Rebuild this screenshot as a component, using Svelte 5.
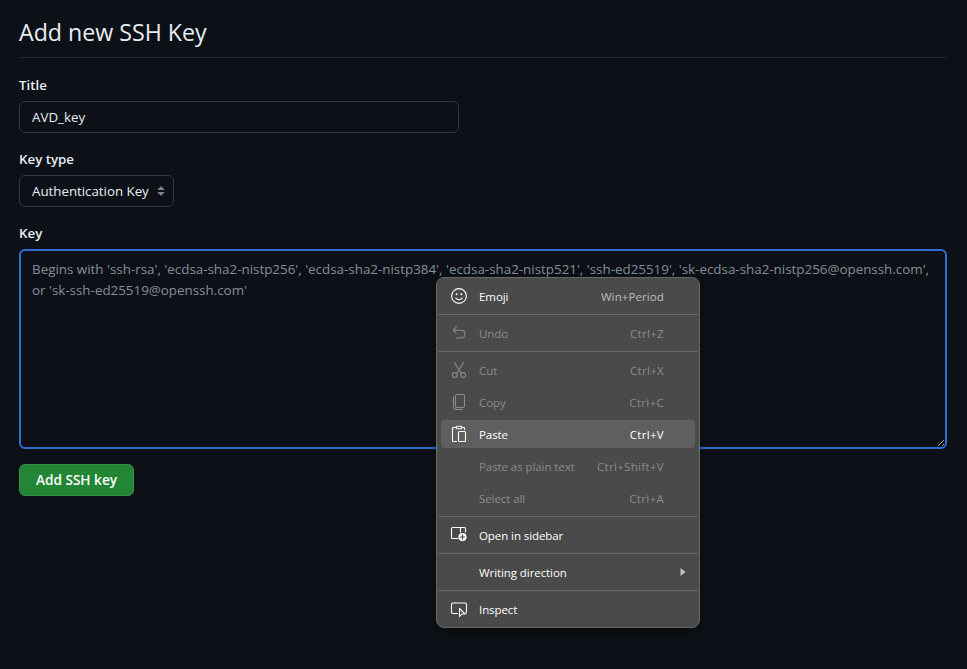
<script>
  const groups = [
    [{ label: 'Emoji', keys: 'Win+Period', icon: 'emoji', on: true }],
    [{ label: 'Undo', keys: 'Ctrl+Z', icon: 'undo' }],
    [
      { label: 'Cut', keys: 'Ctrl+X', icon: 'cut' },
      { label: 'Copy', keys: 'Ctrl+C', icon: 'copy' },
      { label: 'Paste', keys: 'Ctrl+V', icon: 'paste', on: true, active: true },
      { label: 'Paste as plain text', keys: 'Ctrl+Shift+V' },
      { label: 'Select all', keys: 'Ctrl+A' }
    ],
    [{ label: 'Open in sidebar', icon: 'sidebar', on: true }],
    [{ label: 'Writing direction', on: true, submenu: true }],
    [{ label: 'Inspect', icon: 'inspect', on: true }]
  ];
  const placeholder =
    "Begins with 'ssh-rsa', 'ecdsa-sha2-nistp256', 'ecdsa-sha2-nistp384', 'ecdsa-sha2-nistp521', 'ssh-ed25519', 'sk-ecdsa-sha2-nistp256@openssh.com', or 'sk-ssh-ed25519@openssh.com'";
  let title = $state('AVD_key');
</script>

<main>
  <h1>Add new SSH Key</h1>
  <form>
    <label for="title">Title</label>
    <input id="title" bind:value={title} />
    <label for="type">Key type</label>
    <div class="select">
      <select id="type"><option>Authentication Key</option></select>
      <svg width="16" height="16" viewBox="0 0 16 16"><path d="M4.2 7.1 8 2.9l3.8 4.2zM4.2 9h7.6L8 13.1z" fill="#7d8590" /></svg>
    </div>
    <label for="key">Key</label>
    <textarea id="key" {placeholder}></textarea>
    <button type="button">Add SSH key</button>
  </form>
</main>

<div class="menu">
  {#each groups as group, i}
    {#if i > 0}<div class="sep"></div>{/if}
    {#each group as item}
      <div class="item" class:on={item.on} class:active={item.active}>
        <span class="icon">
          <svg width="18" height="18" viewBox="0 0 18 18" fill="none" stroke="currentColor" stroke-width="1.1" stroke-linecap="round" stroke-linejoin="round">
            {#if item.icon === 'emoji'}
              <circle cx="9" cy="9" r="7.4" />
              <path d="M5.8 11.2c1.6 2.1 4.8 2.1 6.4 0" />
              <circle cx="6.6" cy="7.2" r="1" fill="currentColor" stroke="none" />
              <circle cx="11.4" cy="7.2" r="1" fill="currentColor" stroke="none" />
            {:else if item.icon === 'undo'}
              <path d="M6.2 3.2 3.2 6.2l3 3M3.4 6.2h7.4c2.5 0 4.2 1.5 4.2 3.9s-1.7 3.9-4.2 3.9H6.4" />
            {:else if item.icon === 'cut'}
              <path d="m4.4 1.5 6.9 10.7M13.6 1.5 6.7 12.2" />
              <circle cx="4.8" cy="14" r="2.4" />
              <circle cx="13.2" cy="14" r="2.4" />
            {:else if item.icon === 'copy'}
              <rect x="5.5" y="1.5" width="9" height="13" rx="1.6" />
              <path d="M3.5 3.5v10.2c0 1.8 1 2.8 2.8 2.8h6.2" />
            {:else if item.icon === 'paste'}
              <path d="M6 2.5H3.3c-.6 0-.8.3-.8.8v12.4c0 .5.3.8.8.8h3.2M12 2.5h1.7c.6 0 .8.3.8.8v1.2" />
              <rect x="6" y="1.3" width="6" height="2.4" rx="1.1" />
              <rect x="8.5" y="6.5" width="7" height="10" rx="1" />
            {:else if item.icon === 'sidebar'}
              <path d="M8 12.5H2.5c-.7 0-1-.4-1-1v-9c0-.6.3-1 1-1h12c.7 0 1 .4 1 1V6M10.500 1.500V6" />
              <circle cx="12.5" cy="11" r="4.1" fill="currentColor" stroke="none" />
              <path d="M12.5 8.900v4.200M10.400 11h4.200" stroke="#4a4a4a" stroke-width="1.2" />
            {:else if item.icon === 'inspect'}
              <path d="M7.5 13.500H3c-1 0-1.500-.5-1.500-1.500V4.500c0-1 .5-1.500 1.500-1.500h12c1 0 1.500.5 1.500 1.500V12c0 1-.5 1.500-1.500 1.500" />
              <path d="M9.5 8.500v8l2.200-2.500h3.300z" />
            {/if}
          </svg>
        </span>
        <span class="name">{item.label}</span>
        {#if item.keys}<span class="keys" class:ctrl={item.keys.startsWith('Ctrl')}>{item.keys}</span>{/if}
        {#if item.submenu}<svg class="arrow" width="6" height="8" viewBox="0 0 6 8"><path d="M.5 0v8L5.5 4z" fill="#c4c4c4" /></svg>{/if}
      </div>
    {/each}
  {/each}
</div>

<style>
  :global(body) {
    background: #0d1117;
  }
  :global(#app) {
    min-height: 669px;
    position: relative;
  }
  main,
  .menu,
  input,
  select,
  textarea,
  button {
    font-family: 'Open Sans', 'Noto Sans', sans-serif;
  }
  main {
    box-sizing: border-box;
    padding: 17px 20px 0 19px;
    color: #e6edf3;
  }
  h1 {
    margin: 0 0 18px;
    box-sizing: border-box;
    height: 41px;
    line-height: 30px;
    border-bottom: 1px solid #21262d;
    font-size: 23.2px;
    font-weight: 400;
  }
  form {
    display: flex;
    flex-direction: column;
    align-items: flex-start;
  }
  label {
    height: 18px;
    line-height: 18px;
    margin-bottom: 7px;
    font-weight: 600;
    font-size: 13.3px;
  }
  input,
  select {
    box-sizing: border-box;
    height: 32px;
    margin: 0;
    padding: 0 12px;
    border: 1px solid #30363d;
    border-radius: 6px;
    background: #0d1117;
    color: #e6edf3;
    font-size: 13.35px;
    outline: none;
  }
  input {
    width: 440px;
    margin-bottom: 17px;
  }
  .select {
    position: relative;
    height: 32px;
    margin-bottom: 17px;
  }
  select {
    width: 155px;
    appearance: none;
    letter-spacing: -0.03px;
  }
  .select svg {
    position: absolute;
    right: 5px;
    top: 8px;
  }
  textarea {
    box-sizing: border-box;
    width: 928px;
    height: 200px;
    margin: 0 0 15px;
    padding: 8px 11px;
    border: 2px solid #2f6dd0;
    border-radius: 6px;
    background: #0d1117;
    outline: none;
    font-size: 13.39px;
    line-height: 21px;
  }
  textarea::placeholder {
    color: #848d97;
  }
  button {
    width: 115px;
    height: 32px;
    padding: 0 0 1px;
    border: 1px solid #36924a;
    border-radius: 6px;
    background: #238636;
    color: #fff;
    font-size: 13.6px;
    font-weight: 600;
  }
  .menu {
    position: absolute;
    left: 436px;
    top: 277px;
    width: 264px;
    display: flex;
    flex-direction: column;
    box-sizing: border-box;
    padding: 2px 0;
    border: 1px solid #666;
    border-radius: 8px;
    background: #4a4a4a;
    box-shadow: 0 6px 12px rgba(0, 0, 0, 0.4);
    font-size: 11.5px;
    letter-spacing: -0.08px;
  }
  .sep {
    height: 1px;
    margin: 2px 1px;
    background: #686868;
  }
  .item {
    display: flex;
    align-items: center;
    box-sizing: border-box;
    height: 28px;
    margin: 2px 4px;
    padding: 0 31px 0 9px;
    border-radius: 4px;
    color: #8b8b8b;
  }
  .icon {
    width: 29px;
    height: 18px;
  }
  .icon svg {
    display: block;
  }
  .name {
    flex: 1;
    white-space: nowrap;
  }
  .keys {
    letter-spacing: 0.1px;
  }
  .keys.ctrl {
    letter-spacing: 0.32px;
  }
  .on {
    color: #fff;
  }
  .on .keys {
    color: #bdbdbd;
  }
  .active {
    background: #5f5f5f;
  }
  .active .keys {
    color: #fff;
  }
  .arrow {
    margin-right: -22px;
  }
</style>
